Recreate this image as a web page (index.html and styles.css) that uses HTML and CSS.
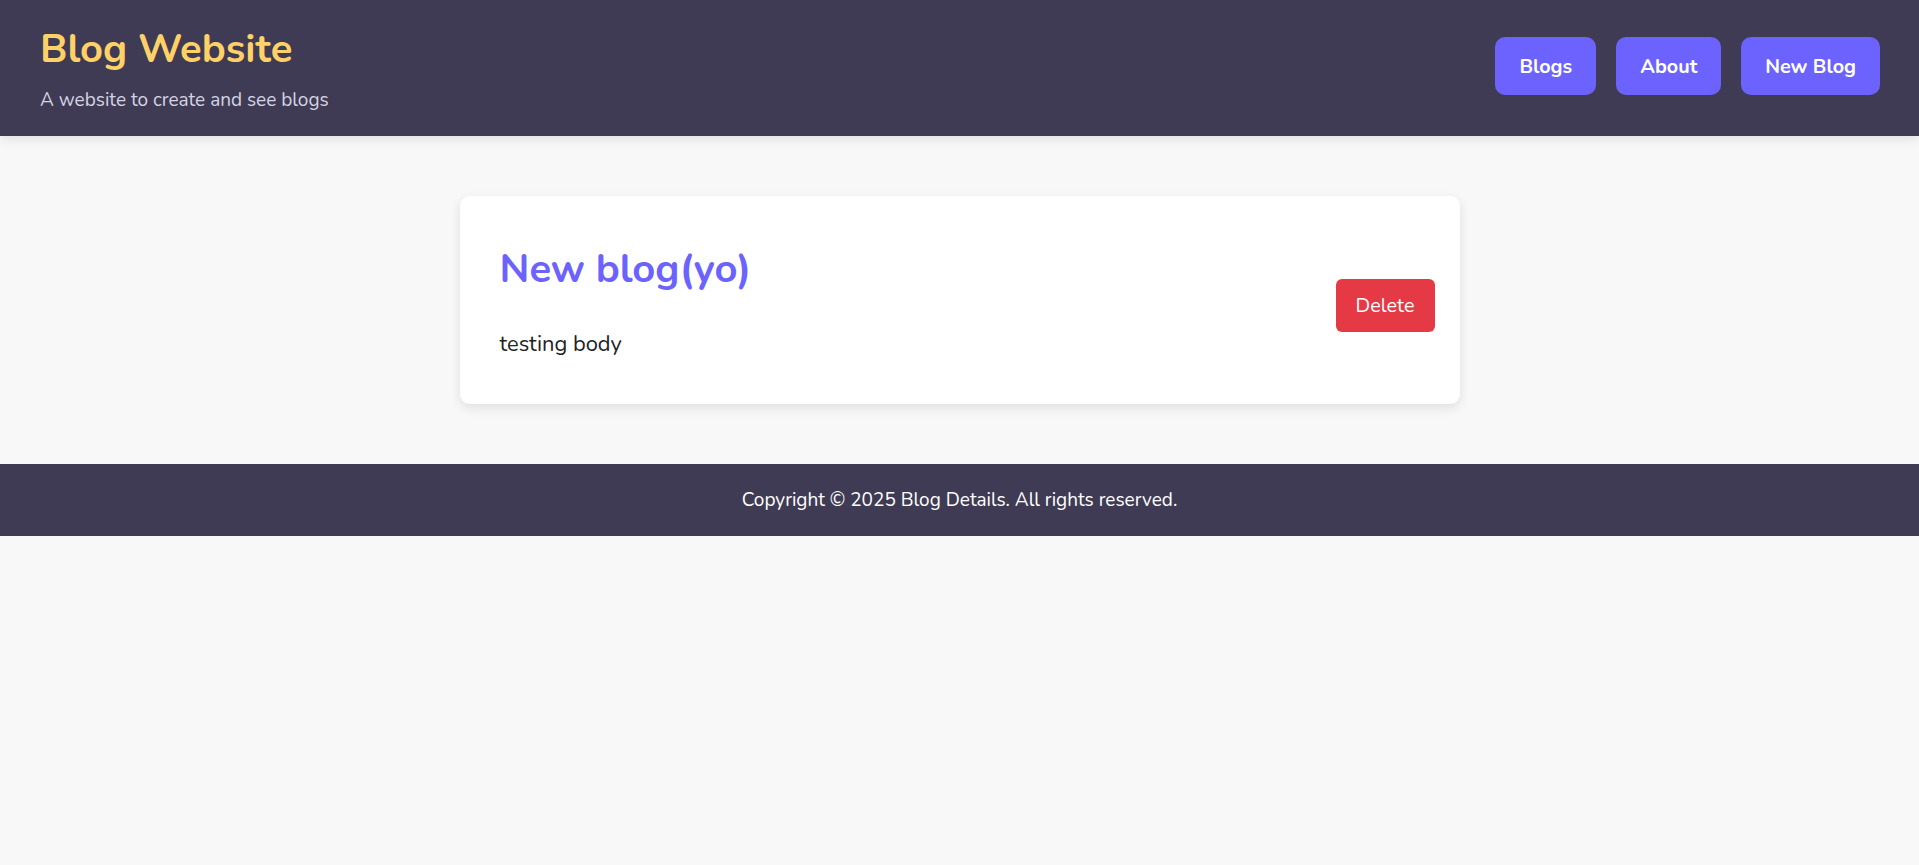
FILE: index.html
```html
<!DOCTYPE html>
<html lang="en">
<head>
<meta charset="utf-8">
<title>Blog Details</title>
<link rel="stylesheet" href="styles.css">
</head>
<body>
<header class="site-header">
  <div class="brand">
    <h1 class="brand-title">Blog Website</h1>
    <p class="brand-sub">A website to create and see blogs</p>
  </div>
  <nav class="nav">
    <a class="nav-btn" href="#">Blogs</a>
    <a class="nav-btn" href="#">About</a>
    <a class="nav-btn" href="#">New Blog</a>
  </nav>
</header>
<main class="main">
  <article class="card">
    <div class="card-body">
      <h2 class="card-title">New blog(yo)</h2>
      <p class="card-text">testing body</p>
    </div>
    <button class="delete-btn" type="button">Delete</button>
  </article>
</main>
<footer class="site-footer">
  <p>Copyright © 2025 Blog Details. All rights reserved.</p>
</footer>
</body>
</html>
```
FILE: styles.css
```css
* { box-sizing: border-box; }
html, body { margin: 0; padding: 0; }
body {
  background: #f8f8f8;
  font-family: Nunito, "Open Sans", "Noto Sans", sans-serif;
  color: #222;
}
.site-header {
  background: #3f3b55;
  height: 136px;
  padding: 0 39px 0 40px;
  display: flex;
  align-items: center;
  justify-content: space-between;
  box-shadow: 0 2px 12px rgba(0,0,0,0.12);
}
.brand { padding-top: 2px; }
.brand-title {
  margin: 0;
  color: #ffd166;
  font-size: 40px;
  font-weight: 700;
  line-height: 48px;
}
.brand-sub {
  margin: 13.6px 0 0;
  color: #d4d3e2;
  font-size: 19px;
  line-height: 26px;
}
.nav { display: flex; gap: 20px; margin-top: -4px; }
.nav-btn {
  display: flex;
  align-items: center;
  justify-content: center;
  height: 58px;
  padding: 0 24px;
  background: #6c63ff;
  color: #fff;
  text-decoration: none;
  font-weight: 700;
  font-size: 19.8px;
  border-radius: 10px;
}
.main { padding: 60px 0; }
.card {
  max-width: 1000px;
  margin: 0 auto;
  background: #fff;
  border-radius: 10px;
  box-shadow: 0 4px 12px rgba(0,0,0,0.1);
  padding: 49px 25px 45px 40px;
  display: flex;
  align-items: center;
  justify-content: space-between;
}
.card-title {
  margin: 0;
  color: #6c63ff;
  font-size: 40px;
  line-height: 48px;
  font-weight: 700;
}
.card-text {
  margin: 35.7px 0 0;
  font-size: 21.9px;
  line-height: 30px;
  color: #222;
}
.delete-btn {
  margin-top: 7px;
  width: 99px;
  height: 53px;
  border: none;
  border-radius: 6px;
  background: #e63946;
  color: #fff;
  font-family: inherit;
  font-size: 19.8px;
  cursor: pointer;
}
.site-footer {
  background: #3f3b55;
  color: #fff;
  height: 72px;
  display: flex;
  align-items: center;
  justify-content: center;
}
.site-footer p { margin: 0; font-size: 19px; }
```
